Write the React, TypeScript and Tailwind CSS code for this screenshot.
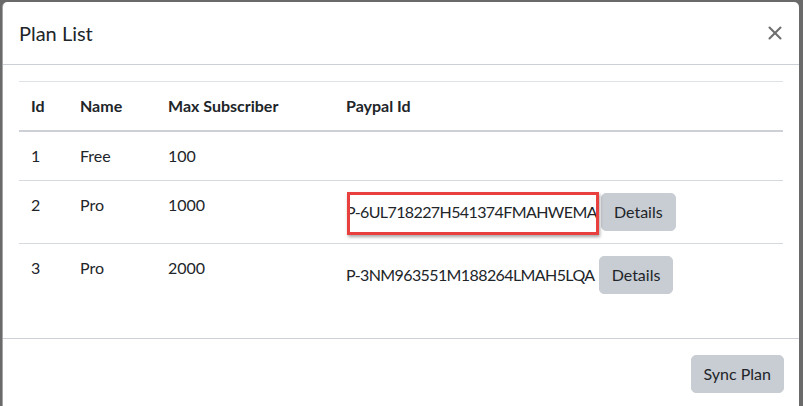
import React from 'react';
import { X } from 'lucide-react';

interface Plan {
  id: number;
  name: string;
  maxSubscriber: number;
  paypalId?: string;
  highlight?: boolean;
}

const plans: Plan[] = [
  { id: 1, name: 'Free', maxSubscriber: 100 },
  { id: 2, name: 'Pro', maxSubscriber: 1000, paypalId: 'P-6UL718227H541374FMAHWEMA', highlight: true },
  { id: 3, name: 'Pro', maxSubscriber: 2000, paypalId: 'P-3NM963551M188264LMAH5LQA' },
];

export default function App() {
  return (
    <div className="h-[406px] w-[803px] overflow-hidden bg-[#6a6a6a] pt-[2px] pl-[2px] pr-[4px] text-[#212529] font-['Lato',sans-serif]">
      <div className="h-[420px] bg-white rounded-t-[5px] border-l border-[#1c1f24]/40">
        <div className="flex items-start justify-between px-4 pt-4 pb-4 border-b border-[#cdd1d7]">
          <h5 className="text-[20px] leading-[30px]">Plan List</h5>
          <button className="mt-[4px] mr-[-3px] text-[#6f6f6f]">
            <X className="w-[22px] h-[22px]" strokeWidth={2.3} />
          </button>
        </div>

        <div className="p-4">
          <table className="w-full border-collapse text-[16px] leading-6 mb-4">
            <thead>
              <tr className="border-t border-[#dee2e6]">
                <th className="w-[49px] text-left font-bold p-3 border-b-2 border-[#cdd1d7]">Id</th>
                <th className="w-[88px] text-left font-bold p-3 border-b-2 border-[#cdd1d7]">Name</th>
                <th className="w-[178px] text-left font-bold p-3 border-b-2 border-[#cdd1d7]">Max Subscriber</th>
                <th className="text-left font-bold p-3 border-b-2 border-[#cdd1d7]">Paypal Id</th>
              </tr>
            </thead>
            <tbody>
              {plans.map(p => (
                <tr key={p.id} className="border-t border-[#d6d9de] align-top">
                  <td className="p-3">{p.id}</td>
                  <td className="p-3">{p.name}</td>
                  <td className="p-3">{p.maxSubscriber}</td>
                  <td className="p-3">
                    {p.paypalId && (
                      <>
                        <span className="relative tracking-[-0.6px]">
                          {p.paypalId}
                          {p.highlight && (
                            <span className="absolute left-[1px] right-[-2px] top-[-10px] bottom-[-14px] border-[3px] border-[#e8403f] shadow-[1px_2px_3px_rgba(0,0,0,0.35)]" />
                          )}
                        </span>{' '}
                        <button className="bg-[#c8ccd3] border border-[#c8ccd3] rounded-[5px] px-3 py-[6px] leading-6 text-[16px]">Details</button>
                      </>
                    )}
                  </td>
                </tr>
              ))}
            </tbody>
          </table>
        </div>

        <div className="flex justify-end px-[11px] py-3 border-t border-[#cdd1d7]">
          <button className="m-1 bg-[#c8ccd3] border border-[#c8ccd3] rounded-[5px] px-3 py-[6px] leading-6 text-[16px]">Sync Plan</button>
        </div>
      </div>
    </div>
  );
}
